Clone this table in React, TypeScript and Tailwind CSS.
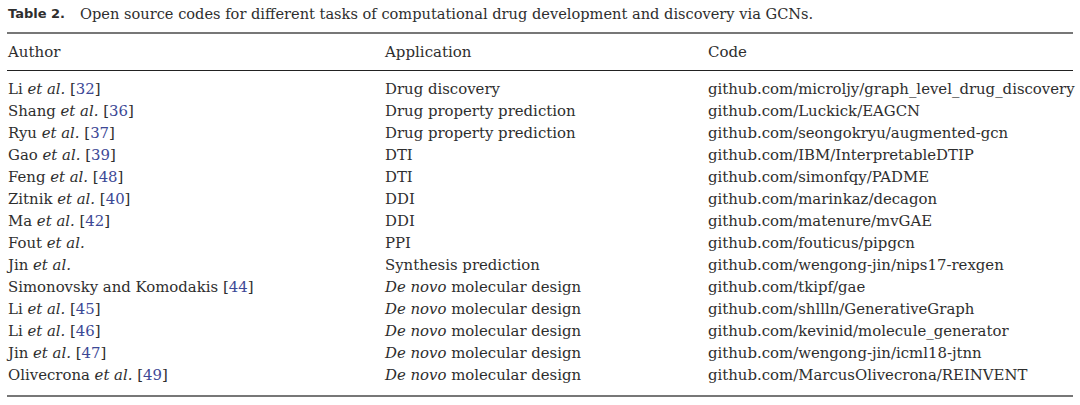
const rows: { author: string; ital?: boolean; ref?: string; app: string; novo?: boolean; code: string }[] = [
  { author: 'Li', ref: '32', app: 'Drug discovery', code: 'github.com/microljy/graph_level_drug_discovery' },
  { author: 'Shang', ref: '36', app: 'Drug property prediction', code: 'github.com/Luckick/EAGCN' },
  { author: 'Ryu', ref: '37', app: 'Drug property prediction', code: 'github.com/seongokryu/augmented-gcn' },
  { author: 'Gao', ref: '39', app: 'DTI', code: 'github.com/IBM/InterpretableDTIP' },
  { author: 'Feng', ref: '48', app: 'DTI', code: 'github.com/simonfqy/PADME' },
  { author: 'Zitnik', ref: '40', app: 'DDI', code: 'github.com/marinkaz/decagon' },
  { author: 'Ma', ref: '42', app: 'DDI', code: 'github.com/matenure/mvGAE' },
  { author: 'Fout', app: 'PPI', code: 'github.com/fouticus/pipgcn' },
  { author: 'Jin', app: 'Synthesis prediction', code: 'github.com/wengong-jin/nips17-rexgen' },
  { author: 'Simonovsky and Komodakis', ital: false, ref: '44', app: 'molecular design', novo: true, code: 'github.com/tkipf/gae' },
  { author: 'Li', ref: '45', app: 'molecular design', novo: true, code: 'github.com/shllln/GenerativeGraph' },
  { author: 'Li', ref: '46', app: 'molecular design', novo: true, code: 'github.com/kevinid/molecule_generator' },
  { author: 'Jin', ref: '47', app: 'molecular design', novo: true, code: 'github.com/wengong-jin/icml18-jtnn' },
  { author: 'Olivecrona', ref: '49', app: 'molecular design', novo: true, code: 'github.com/MarcusOlivecrona/REINVENT' },
];

export default function App() {
  return (
    <div className="h-[405px] w-[1080px] bg-white pl-[7px] text-[#2e2e2e] [font-family:'DejaVu_Serif',serif]">
      <div className="w-[1066px]">
        <p className="flex h-[32px] items-center pb-[5px] pl-px text-[14.6px]">
          <span className="mr-[15px] text-[13px] font-bold [font-family:'DejaVu_Sans',sans-serif]">Table 2.</span>
          Open source codes for different tasks of computational drug development and discovery via GCNs.
        </p>
        <div className="border-y-2 border-t-[#777] border-b-[#222] border-b-[1.5px]">
          <div className="grid h-[36px] grid-cols-[377px_323px_1fr] items-center pl-px text-[15px]">
            <span>Author</span>
            <span>Application</span>
            <span>Code</span>
          </div>
        </div>
        <div className="border-b-2 border-[#777] pb-[9px] pt-[7px]">
          {rows.map((r, i) => (
            <div key={i} className="grid h-[22px] grid-cols-[377px_323px_1fr] items-center pl-px text-[14.9px]">
              <span>
                {r.author}
                {r.ital === false ? '' : <i> et al.</i>}
                {r.ref && (
                  <>
                    {' '}
                    <span>[</span>
                    <span className="text-[#3c4896]">{r.ref}</span>
                    <span>]</span>
                  </>
                )}
              </span>
              <span>
                {r.novo && <i>De novo </i>}
                {r.app}
              </span>
              <span>{r.code}</span>
            </div>
          ))}
        </div>
      </div>
    </div>
  );
}
